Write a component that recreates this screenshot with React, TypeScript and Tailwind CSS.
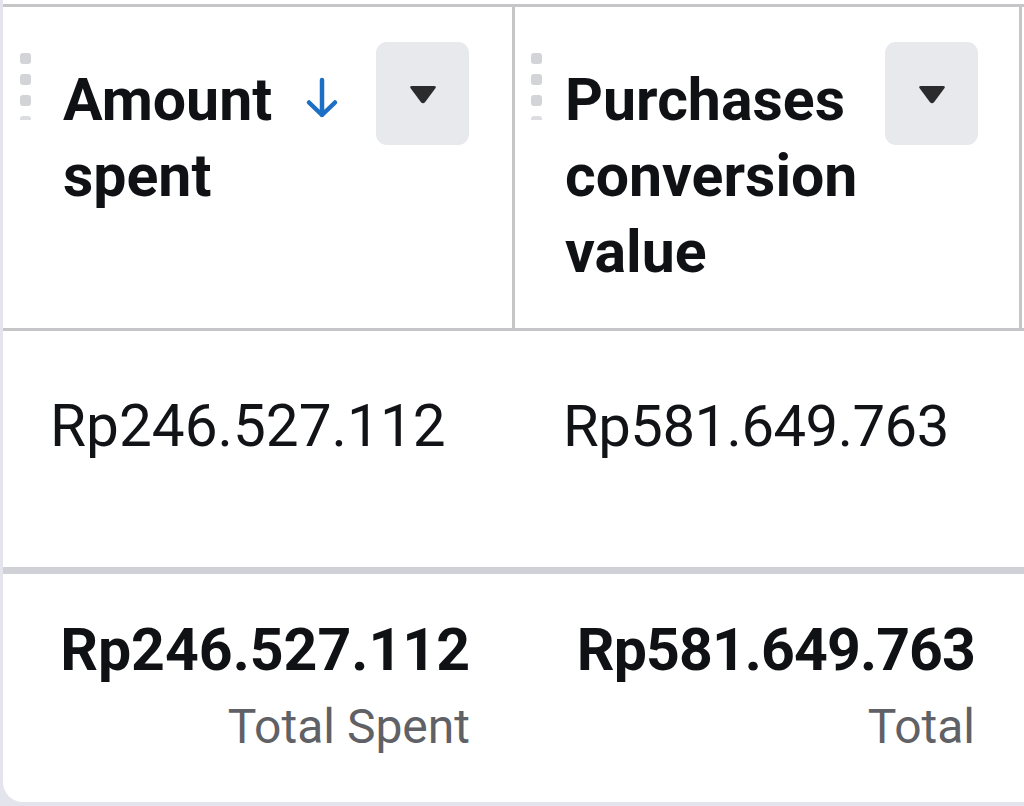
import React from "react";

const font = { fontFamily: "Roboto, 'Noto Sans', Arial, sans-serif" };

function Handle() {
  return (
    <div className="flex flex-col gap-[10px] pt-[46px] w-[11px] shrink-0">
      <div className="w-[11px] h-[11px] rounded-[3px] bg-[#d3d4d8]" />
      <div className="w-[11px] h-[11px] rounded-[3px] bg-[#d3d4d8]" />
      <div className="w-[11px] h-[11px] rounded-[3px] bg-[#d3d4d8]" />
      <div className="w-[11px] h-[4px] rounded-t-[3px] bg-[#dcdde0]" />
    </div>
  );
}

function DropButton() {
  return (
    <div className="w-[93px] h-[103px] rounded-[11px] bg-[#e8e9ed] flex items-center justify-center">
      <svg width="30" height="22" viewBox="0 0 30 22">
        <path
          d="M4 3 H26 Q29 3 27.2 5.6 L17.2 19 Q15 21.6 12.8 19 L2.8 5.6 Q1 3 4 3 Z"
          fill="#2b2b2e"
        />
      </svg>
    </div>
  );
}

function SortArrow() {
  return (
    <svg width="36" height="42" viewBox="0 0 36 42" className="shrink-0">
      <path
        d="M18 3 V38 M5 25.5 L18 38 L31 25.5"
        fill="none"
        stroke="#1b6fc4"
        strokeWidth="4.5"
        strokeLinecap="round"
        strokeLinejoin="round"
      />
    </svg>
  );
}

export default function App() {
  return (
    <div
      className="w-[1024px] h-[806px] bg-[#e4e4ec] pl-[3px] pb-[4px] overflow-hidden"
      style={font}
    >
      <div className="bg-white h-full rounded-bl-[20px] pt-[4px] flex flex-col overflow-hidden">
        {/* Header */}
        <div className="flex border-t-[3px] border-b-[3px] border-[#c6c6c8] h-[327px] shrink-0">
          <div className="w-[512px] shrink-0 border-r-[3px] border-[#c6c6c8] flex pl-[17px] pr-[43px]">
            <Handle />
            <div className="flex flex-1 pl-[32px] pt-[55px]">
              <div className="w-[241px] text-[59px] leading-[76px] font-bold text-[#0f1114]">
                Amount spent
              </div>
              <div className="pt-[15px]">
                <SortArrow />
              </div>
            </div>
            <div className="pt-[35px]">
              <DropButton />
            </div>
          </div>
          <div className="w-[507px] shrink-0 border-r-[3px] border-[#c6c6c8] flex pl-[16px] pr-[41px]">
            <Handle />
            <div className="flex flex-1 pl-[23px] pt-[55px]">
              <div className="w-[310px] text-[59px] leading-[76px] font-bold text-[#0f1114]">
                Purchases conversion value
              </div>
            </div>
            <div className="pt-[35px]">
              <DropButton />
            </div>
          </div>
        </div>

        {/* Body row */}
        <div className="flex h-[236px] shrink-0">
          <div className="w-[512px] shrink-0 pl-[47px] pt-[60px] text-[58.5px] leading-[70px] text-[#111316]">
            Rp246.527.112
          </div>
          <div className="w-[507px] shrink-0 pl-[48px] pt-[60px] text-[58px] leading-[70px] text-[#111316] tracking-[-0.5px]">
            Rp581.649.763
          </div>
        </div>

        {/* Separator */}
        <div className="h-[7px] bg-[#d0d1d6] shrink-0" />

        {/* Footer */}
        <div className="flex flex-1">
          <div className="w-[512px] shrink-0 pr-[45px] pt-[41px] flex flex-col items-end">
            <div className="text-[59px] leading-[70px] font-bold text-[#0f1114]">
              Rp246.527.112
            </div>
            <div className="text-[48px] leading-[60px] text-[#5f6166] mt-[12px]">
              Total Spent
            </div>
          </div>
          <div className="w-[507px] shrink-0 pr-[47px] pt-[41px] flex flex-col items-end">
            <div className="text-[59px] leading-[70px] font-bold text-[#0f1114] tracking-[-0.9px]">
              Rp581.649.763
            </div>
            <div className="text-[48px] leading-[60px] text-[#5f6166] mt-[12px]">
              Total
            </div>
          </div>
        </div>
      </div>
    </div>
  );
}
